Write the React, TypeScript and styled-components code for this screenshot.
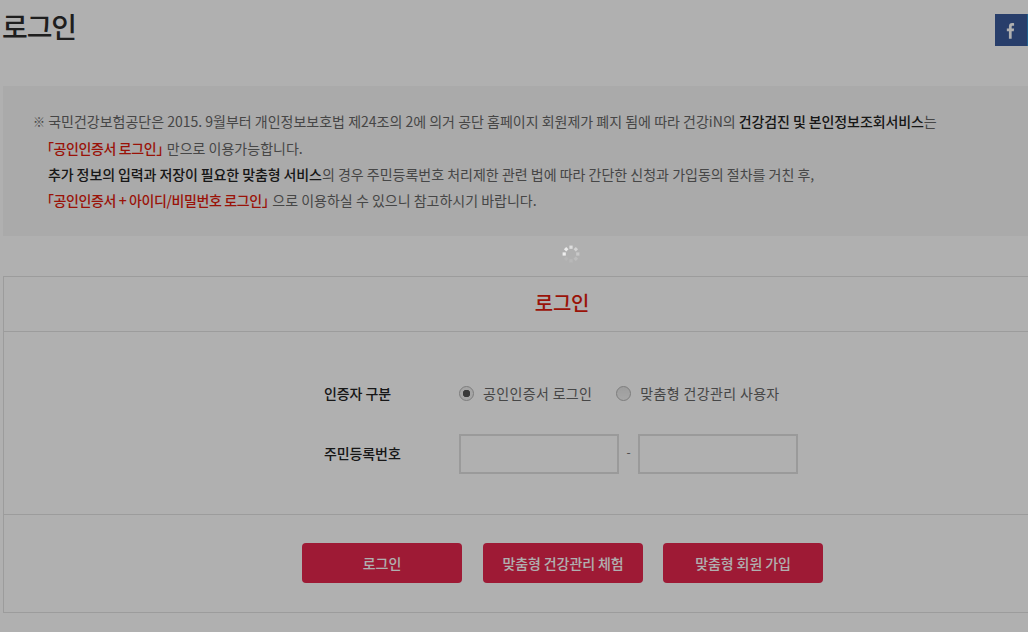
import React from "react"
import styled, { createGlobalStyle } from "styled-components"

const Global = createGlobalStyle`
    html, body {
        margin: 0;
        padding: 0;
        background: #fff;
        overflow: hidden;
    }
    body {
        font-family: "Noto Sans CJK KR", "Noto Sans", sans-serif;
        color: #666;
    }
    * { box-sizing: border-box; }
`

const Page = styled.div`
    width: 1028px;
    height: 632px;
    overflow: hidden;
`
const Top = styled.header`
    display: flex;
    justify-content: space-between;
    align-items: flex-start;
    height: 86px;
    padding: 14px 0 0 2px;
`
const Title = styled.h1`
    margin: -4px 0 0;
    font-size: 28px;
    line-height: 32px;
    font-weight: 500;
    letter-spacing: -1.1px;
    color: #2c2c2c;
`
const Social = styled.div`
    display: flex;
    flex: none;
    width: 33px;
    overflow: hidden;
`
const Facebook = styled.a`
    flex: none;
    width: 32px;
    height: 32px;
    background: #3b5a9b;
    color: #fff;
    display: flex;
    align-items: center;
    justify-content: center;
`
const Twitter = styled.a`
    flex: none;
    width: 32px;
    height: 32px;
    background: #2f8fd0;
`
const Notice = styled.section`
    margin-left: 3px;
    height: 150px;
    padding: 22px 0 0 30px;
    background: #f6f6f6;
    font-size: 14px;
    line-height: 26px;
`
const NoticeLine = styled.p<{ $indent?: boolean }>`
    margin: 0;
    padding-left: ${p => (p.$indent ? "15px" : "0")};
    white-space: nowrap;
`
const Mark = styled.span`
    display: inline-block;
    width: 12px;
    font-size: 12px;
`
const Strong = styled.b`
    font-weight: 500;
    letter-spacing: -0.1px;
    color: #222;
`
const Red = styled.b`
    font-weight: 500;
    letter-spacing: -0.4px;
    color: #e01b0c;
`
const Open = styled.span`
    margin-left: -8px;
`
const Close = styled.span`
    letter-spacing: -6.5px;
`
const LoginBox = styled.section`
    margin: 40px 0 0 3px;
    width: 1118px;
    height: 337px;
    border: 1px solid #e2e2e2;
`
const BoxTitle = styled.h2`
    margin: 0;
    height: 54px;
    font-size: 20px;
    font-weight: 500;
    line-height: 52px;
    letter-spacing: -0.2px;
    text-align: center;
    color: #e01b0c;
`
const Form = styled.div`
    border-top: 1px solid #e2e2e2;
    border-bottom: 1px solid #e2e2e2;
    height: 184px;
    padding: 42px 0 0 320px;
    display: grid;
    grid-template-columns: 135px 1fr;
    grid-auto-rows: 40px;
    row-gap: 20px;
    align-items: center;
`
const Label = styled.label`
    margin-top: -2px;
    font-size: 14px;
    font-weight: 500;
    letter-spacing: -0.1px;
    color: #222;
`
const Choices = styled.div`
    display: flex;
    align-items: center;
    margin-top: -2px;
`
const Choice = styled.label`
    display: flex;
    align-items: center;
    gap: 9px;
    margin-right: 24px;
    font-size: 14px;
    letter-spacing: 0.35px;
`
const Radio = styled.span<{ $on?: boolean }>`
    flex: none;
    width: 15px;
    height: 15px;
    border-radius: 50%;
    border: 1px solid #b5b5b5;
    background: ${p => (p.$on ? "radial-gradient(circle, #555 0 3.5px, #f0f0f0 4px)" : "linear-gradient(#e4e4e4, #f2f2f2)")};
`
const Fields = styled.div`
    display: flex;
    align-items: center;
`
const Field = styled.input`
    width: 160px;
    height: 40px;
    margin: 0;
    padding: 0 8px;
    border: 2px solid #e0e0e0;
    background: #fff;
    outline: none;
`
const Dash = styled.span`
    width: 19px;
    padding-bottom: 6px;
    text-align: center;
    font-size: 12px;
`
const Actions = styled.div`
    display: flex;
    gap: 20px;
    padding: 28px 0 0 298px;
`
const Action = styled.button`
    width: 160px;
    height: 40px;
    border: 0;
    border-radius: 4px;
    background: #e5264d;
    color: #fff;
    font-family: inherit;
    font-size: 14px;
    font-weight: 500;
    letter-spacing: -0.1px;
    &:nth-child(2) { margin-left: 1px; }
`
const Dim = styled.div`
    position: fixed;
    inset: 0;
    background: rgba(0, 0, 0, 0.31);
`
const Spinner = styled.svg`
    position: fixed;
    left: 561px;
    top: 244px;
    width: 20px;
    height: 20px;
`

const dots = [
    { a: 270, o: 1 },
    { a: 315, o: 0.95 },
    { a: 0, o: 0.75 },
    { a: 45, o: 0.55 },
    { a: 90, o: 0.4 },
    { a: 135, o: 0.2 },
    { a: 180, o: 0.12 },
    { a: 225, o: 0.08 },
]

export default function App() {
    return (
        <Page>
            <Global />
            <Top>
                <Title>로그인</Title>
                <Social>
                    <Facebook>
                        <svg width="10" height="17" viewBox="0 0 12 20">
                            <path fill="currentColor" d="M3.5 20V11H1V7.6h2.5V5.2C3.5 2.4 5 1 7.4 1c1 0 1.9.1 2.3.2v3H8.2C7 4.2 6.8 4.8 6.8 5.7v1.9h2.9L9.3 11H6.8v9z" />
                        </svg>
                    </Facebook>
                    <Twitter />
                </Social>
            </Top>
            <Notice>
                <NoticeLine>
                    <Mark>※</Mark> 국민건강보험공단은 2015. 9월부터 개인정보보호법 제24조의 2에 의거 공단 홈페이지 회원제가 폐지 됨에 따라 건강iN의 <Strong>건강검진 및 본인정보조회서비스</Strong>는
                </NoticeLine>
                <NoticeLine $indent>
                    <Red><Open>「</Open>공인인증서 로그인<Close>」</Close></Red> 만으로 이용가능합니다.
                </NoticeLine>
                <NoticeLine $indent>
                    <Strong>추가 정보의 입력과 저장이 필요한 맞춤형 서비스</Strong>의 경우 주민등록번호 처리제한 관련 법에 따라 간단한 신청과 가입동의 절차를 거친 후,
                </NoticeLine>
                <NoticeLine $indent>
                    <Red><Open>「</Open>공인인증서 + 아이디/비밀번호 로그인<Close>」</Close></Red> 으로 이용하실 수 있으니 참고하시기 바랍니다.
                </NoticeLine>
            </Notice>
            <LoginBox>
                <BoxTitle>로그인</BoxTitle>
                <Form>
                    <Label>인증자 구분</Label>
                    <Choices>
                        <Choice><Radio $on />공인인증서 로그인</Choice>
                        <Choice><Radio />맞춤형 건강관리 사용자</Choice>
                    </Choices>
                    <Label>주민등록번호</Label>
                    <Fields>
                        <Field />
                        <Dash>-</Dash>
                        <Field />
                    </Fields>
                </Form>
                <Actions>
                    <Action>로그인</Action>
                    <Action>맞춤형 건강관리 체험</Action>
                    <Action>맞춤형 회원 가입</Action>
                </Actions>
            </LoginBox>
            <Dim />
            <Spinner viewBox="0 0 20 20">
                {dots.map(d => (
                    <rect
                        key={d.a}
                        x="8.4"
                        y="1.6"
                        width="3.2"
                        height="3.2"
                        fill="#eee"
                        opacity={d.o}
                        transform={`rotate(${d.a} 10 10)`}
                    />
                ))}
            </Spinner>
        </Page>
    )
}
